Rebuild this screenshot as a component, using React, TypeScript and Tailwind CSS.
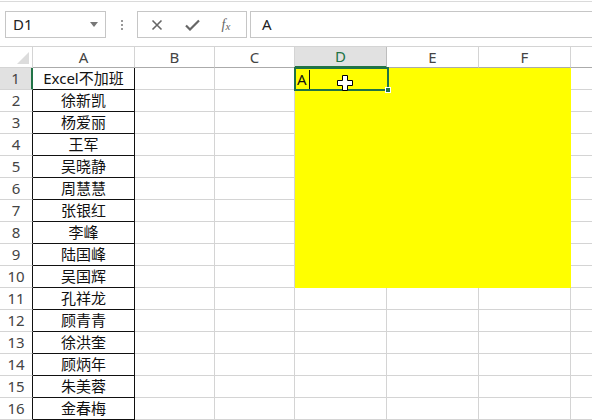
import React from "react";

const names = [
  "Excel不加班",
  "徐新凯",
  "杨爱丽",
  "王军",
  "吴晓静",
  "周慧慧",
  "张银红",
  "李峰",
  "陆国峰",
  "吴国辉",
  "孔祥龙",
  "顾青青",
  "徐洪奎",
  "顾炳年",
  "朱美蓉",
  "金春梅",
];

const cols = [
  { key: "A", w: "w-[102px]" },
  { key: "B", w: "w-[80px]" },
  { key: "C", w: "w-[80px]" },
  { key: "D", w: "w-[92px]" },
  { key: "E", w: "w-[92px]" },
  { key: "F", w: "w-[92px]" },
];

function Row({ i }: { i: number }) {
  const n = i + 1;
  const yellow = n <= 10;
  const sel = n === 1;
  return (
    <div className="flex h-[22px]">
      <div
        className={
          "w-[33px] shrink-0 flex items-center justify-center text-[#444] border-b border-[#d4d4d4] " +
          (sel ? "bg-[#e1e1e1] border-r-2 border-r-[#217346]" : "border-r border-r-[#111]")
        }
      >
        {n}
      </div>
      <div className="w-[102px] shrink-0 flex items-center justify-center text-[#111] border-r border-b border-[#111]">
        {names[i]}
      </div>
      <div className="w-[80px] shrink-0 border-r border-b border-[#d4d4d4]" />
      <div className="w-[80px] shrink-0 border-r border-b border-[#d4d4d4]" />
      {yellow ? (
        <div className="w-[276px] shrink-0 bg-[#ffff00]" />
      ) : (
        <>
          <div className="w-[92px] shrink-0 border-r border-b border-[#d4d4d4]" />
          <div className="w-[92px] shrink-0 border-r border-b border-[#d4d4d4]" />
          <div className="w-[92px] shrink-0 border-r border-b border-[#d4d4d4]" />
        </>
      )}
      <div className="flex-1 border-b border-[#d4d4d4]" />
    </div>
  );
}

export default function App() {
  return (
    <div
      className="relative w-[592px] h-[420px] overflow-hidden bg-white text-[15px] leading-none"
      style={{ fontFamily: '"Noto Sans", "Noto Sans CJK SC", sans-serif' }}
    >
      <div className="h-[1px] mt-[1px] bg-[#dadada]" />
      {/* toolbar */}
      <div className="flex items-center h-[27px] mt-[9px]">
        <div className="ml-[5px] w-[101px] h-full border border-[#c6c6c6] flex items-center justify-between pl-[7px] pr-[7px] text-[#222]">
          <span>D1</span>
          <svg width="8" height="5" viewBox="0 0 8 5">
            <path d="M0 0 L8 0 L4 5 Z" fill="#777" />
          </svg>
        </div>
        <div className="w-[31px] flex flex-col items-center justify-center gap-[2px]">
          <div className="w-[2px] h-[2px] bg-[#999]" />
          <div className="w-[2px] h-[2px] bg-[#999]" />
          <div className="w-[2px] h-[2px] bg-[#999]" />
        </div>
        <div className="w-[110px] h-full border border-[#c6c6c6] flex items-center">
          <div className="w-[37px] flex justify-center">
            <svg width="12" height="12" viewBox="0 0 12 12">
              <path d="M1.5 1.5 L10.5 10.5 M10.5 1.5 L1.5 10.5" stroke="#666" strokeWidth="1.6" />
            </svg>
          </div>
          <div className="w-[34px] flex justify-center">
            <svg width="15" height="12" viewBox="0 0 15 12">
              <path d="M1 6.5 L5 10.5 L14 1.5" stroke="#666" strokeWidth="2.2" fill="none" />
            </svg>
          </div>
          <div
            className="w-[34px] flex justify-center text-[#666] italic text-[14px]"
            style={{ fontFamily: '"Liberation Serif", serif' }}
          >
            f<span className="text-[11px] mt-[3px]">x</span>
          </div>
        </div>
        <div className="ml-[3px] flex-1 h-full border border-r-0 border-[#c6c6c6] flex items-center pl-[11px] text-[#222]">
          A
        </div>
      </div>
      {/* gap + line */}
      <div className="h-[8px]" />
      <div className="h-[1px] bg-[#d4d4d4]" />
      {/* column headers */}
      <div className="flex h-[21px] text-[#444]">
        <div className="relative w-[33px] shrink-0 border-r border-b border-[#d4d4d4]">
          <svg className="absolute right-[3px] bottom-[3px]" width="12" height="12" viewBox="0 0 12 12">
            <path d="M12 0 L12 12 L0 12 Z" fill="#dcdcdc" />
          </svg>
        </div>
        {cols.map((c) => (
          <div
            key={c.key}
            className={
              c.w +
              " shrink-0 flex items-center justify-center border-r " +
              (c.key === "D"
                ? "bg-[#e1e1e1] text-[#217346] border-r-[#bdbdbd] border-b-2 border-b-[#217346]"
                : "border-[#d4d4d4] border-b border-b-[#ababab]")
            }
          >
            {c.key}
          </div>
        ))}
        <div className="flex-1 border-b border-b-[#ababab]" />
      </div>
      {/* rows */}
      {names.map((_, i) => (
        <Row key={i} i={i} />
      ))}
      {/* selection D1 */}
      <div className="absolute left-[294px] top-[67px] w-[95px] h-[24px] border-2 border-[#217346] flex items-center">
        <span className="ml-[1px] text-[#111]">A</span>
        <span className="ml-[2px] w-[1px] h-[19px] bg-[#111]" />
        <div className="absolute right-[-4px] bottom-[-4px] w-[6px] h-[6px] bg-[#217346] border border-white" />
      </div>
      {/* mouse cursor */}
      <svg className="absolute left-[337px] top-[75px]" width="16" height="16" viewBox="0 0 16 16">
        <path
          d="M5.5 0.5 H10.5 V5.5 H15.5 V10.5 H10.5 V15.5 H5.5 V10.5 H0.5 V5.5 H5.5 Z"
          fill="#fff"
          stroke="#000"
          strokeWidth="1"
        />
      </svg>
    </div>
  );
}
